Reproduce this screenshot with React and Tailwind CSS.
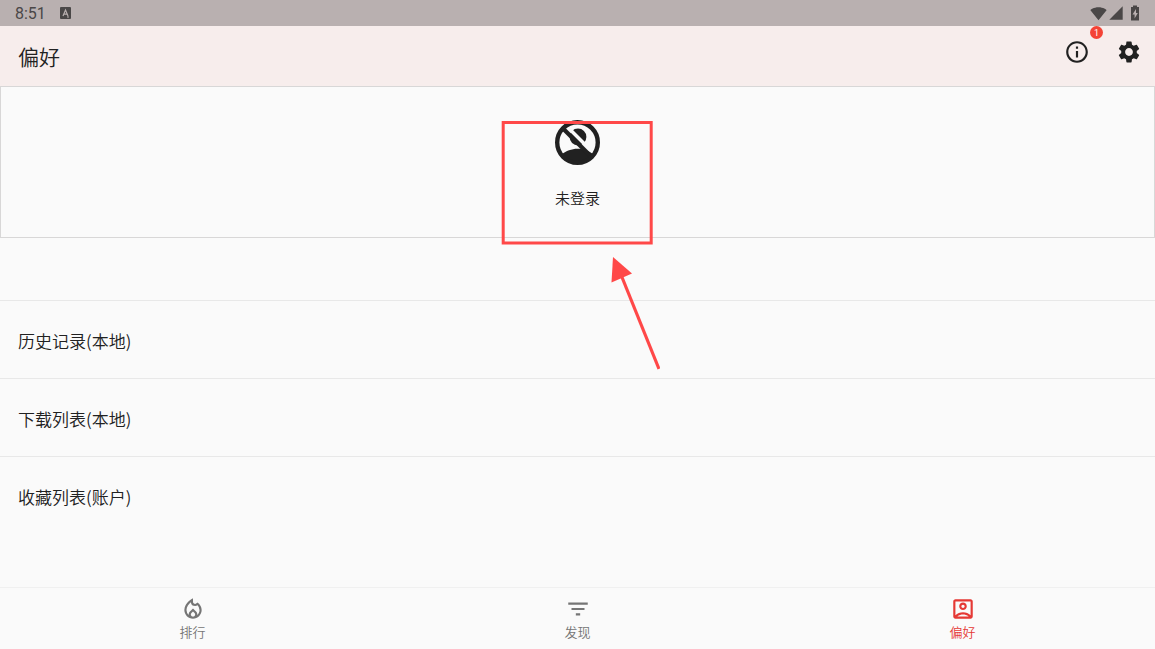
import React from "react";
import {
  MdOutlineInfo,
  MdSettings,
  MdOutlineLocalFireDepartment,
  MdFilterList,
  MdOutlineAccountBox,
  MdSignalWifi4Bar,
  MdSignalCellular4Bar,
} from "react-icons/md";

const rows = ["历史记录(本地)", "下载列表(本地)", "收藏列表(账户)"];

const tabs = [
  { label: "排行", Icon: MdOutlineLocalFireDepartment },
  { label: "发现", Icon: MdFilterList },
  { label: "偏好", Icon: MdOutlineAccountBox, active: true },
];

function NoAccountIcon() {
  return (
    <svg viewBox="0 0 45 45" className="size-[45px]" aria-hidden="true">
      <circle cx="23" cy="17" r="8.4" fill="#212121" />
      <path d="M11 5.500L38 32.500" stroke="#fafafa" strokeWidth="3.6" />
      <path d="M7 34C11 31 16.500 28.700 22.500 28.700C28.500 28.700 34 31 38 34C34 40 29 43 22.500 43C16 43 11 40 7 34Z" fill="#212121" />
      <path d="M7.500 8L36 36.500" stroke="#212121" strokeWidth="4.2" />
      <circle cx="22.5" cy="22.5" r="20.3" fill="none" stroke="#212121" strokeWidth="4.4" />
    </svg>
  );
}

function StatusBar() {
  return (
    <div className="flex h-[26px] shrink-0 items-center justify-between bg-[#b9b0b0] pr-3 pl-[15px] text-[#4a4747]">
      <div className="flex items-center gap-3.5">
        <span className="pt-px font-[Roboto] text-base leading-[26px] font-normal">8:51</span>
        <svg viewBox="0 0 11 12" className="h-3 w-[11px]" aria-hidden="true">
          <rect width="11" height="12" rx="1" fill="currentColor" />
          <path d="M3 9L5.5 3L8 9M4 7.2H7" fill="none" stroke="#b9b0b0" strokeWidth="1.2" />
          <path d="M7 10H9" stroke="#b9b0b0" />
        </svg>
      </div>
      <div className="flex items-center gap-px">
        <MdSignalWifi4Bar className="size-[17px]" />
        <MdSignalCellular4Bar className="size-4" />
        <svg viewBox="0 0 16 16" className="ml-0.5 size-4" aria-hidden="true">
          <path d="M6 0.500H10V2H12V15.500H4V2H6Z" fill="currentColor" />
          <path d="M9 4L5.500 9.500H7.600V13.500L10.800 8H9Z" fill="#b9b0b0" />
        </svg>
      </div>
    </div>
  );
}

function Annotation() {
  return (
    <svg
      viewBox="0 0 160 252"
      className="pointer-events-none absolute top-[119px] left-1/2 -ml-[78px] h-[252px] w-40"
      aria-hidden="true"
    >
      <rect x="3.2" y="3.5" width="148" height="120.5" fill="none" stroke="#ff4848" strokeWidth="3" />
      <path d="M121.500 157L159 250" stroke="#ff4848" strokeWidth="3.2" />
      <path d="M113 138L132 154.500L111.500 163.500Z" fill="#ff4848" />
    </svg>
  );
}

export default function App() {
  return (
    <div className="relative flex min-h-screen flex-col overflow-hidden bg-[#fafafa] font-['Noto_Sans_CJK_SC',sans-serif] font-[350] text-[#212121]">
      <StatusBar />
      <header className="flex h-[60px] shrink-0 items-center justify-between bg-[#f7edec] pr-[13px] pl-[18px]">
        <h1 className="text-[21px] leading-8 font-[350]">偏好</h1>
        <div className="flex items-center gap-[26px] pb-2">
          <button type="button" aria-label="信息" className="relative">
            <MdOutlineInfo className="size-[26px]" />
            <span className="absolute -top-[13px] -right-[13px] flex size-[13px] items-center justify-center rounded-full bg-[#f44336] font-[Roboto] text-[9px] leading-3 font-normal text-white">
              1
            </span>
          </button>
          <button type="button" aria-label="设置">
            <MdSettings className="size-[26px]" />
          </button>
        </div>
      </header>
      <main className="flex-1">
        <section className="flex h-[152px] flex-col items-center border border-[#d8d7d7] pt-[33px]">
          <button type="button" className="flex flex-col items-center gap-[21px]">
            <NoAccountIcon />
            <span className="text-[15px] leading-6">未登录</span>
          </button>
        </section>
        <ul className="mt-[62px]">
          {rows.map((label) => (
            <li key={label} className="border-t border-[#e8e8e8]">
              <button type="button" className="flex h-[77px] w-full items-center px-[18px] pt-0.5 text-left text-[17px]">
                {label}
              </button>
            </li>
          ))}
        </ul>
      </main>
      <nav className="grid h-[62px] shrink-0 grid-cols-3 border-t border-[#f0f0f0]">
        {tabs.map(({ label, Icon, active }) => (
          <a
            key={label}
            href="#"
            aria-current={active ? "page" : undefined}
            className={`flex flex-col items-center pt-2 ${active ? "text-[#e53935]" : "text-[#757575]"}`}
          >
            <Icon className="size-[26px]" />
            <span className="text-[13px] leading-5">{label}</span>
          </a>
        ))}
      </nav>
      <Annotation />
    </div>
  );
}
